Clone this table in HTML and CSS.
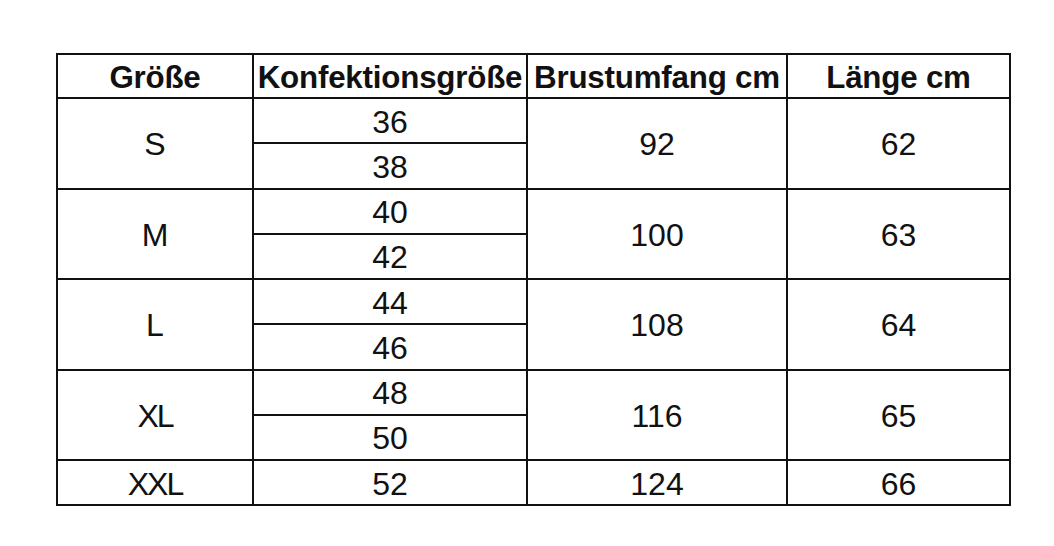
FILE: index.html
```html
<!DOCTYPE html>
<html lang="de">
<head>
<meta charset="utf-8">
<title>Größentabelle</title>
<link rel="stylesheet" href="styles.css">
</head>
<body>
<div class="table">
  <div class="cell head">Größe</div>
  <div class="cell head">Konfektionsgröße</div>
  <div class="cell head">Brustumfang cm</div>
  <div class="cell head">Länge cm</div>

  <div class="cell span2">S</div>
  <div class="cell">36</div>
  <div class="cell span2">92</div>
  <div class="cell span2">62</div>
  <div class="cell">38</div>

  <div class="cell span2">M</div>
  <div class="cell">40</div>
  <div class="cell span2">100</div>
  <div class="cell span2">63</div>
  <div class="cell">42</div>

  <div class="cell span2">L</div>
  <div class="cell">44</div>
  <div class="cell span2">108</div>
  <div class="cell span2">64</div>
  <div class="cell">46</div>

  <div class="cell span2 tight">XL</div>
  <div class="cell">48</div>
  <div class="cell span2">116</div>
  <div class="cell span2">65</div>
  <div class="cell">50</div>

  <div class="cell tight">XXL</div>
  <div class="cell">52</div>
  <div class="cell">124</div>
  <div class="cell">66</div>
</div>
</body>
</html>
```
FILE: styles.css
```css
html, body {
  margin: 0;
  padding: 0;
  background: #ffffff;
}
body {
  padding: 53px 0 0 56px;
}
.table {
  width: 955px;
  box-sizing: border-box;
  padding: 2px;
  background: #111111;
  display: grid;
  grid-template-columns: 194px 272px 258px 221px;
  grid-template-rows: 42px repeat(9, 43.25px);
  gap: 2px;
}
.cell {
  background: #ffffff;
  display: flex;
  align-items: center;
  justify-content: center;
  font-family: "Liberation Sans", Arial, sans-serif;
  font-size: 32px;
  color: #111111;
  line-height: 1;
  white-space: nowrap;
  overflow: hidden;
  padding-top: 2px;
  box-sizing: border-box;
}
.span2 {
  grid-row: span 2;
}
.tight {
  letter-spacing: -2px;
}
.head {
  font-weight: 700;
  font-size: 31.3px;
  letter-spacing: -0.2px;
  padding-top: 3px;
}
```
